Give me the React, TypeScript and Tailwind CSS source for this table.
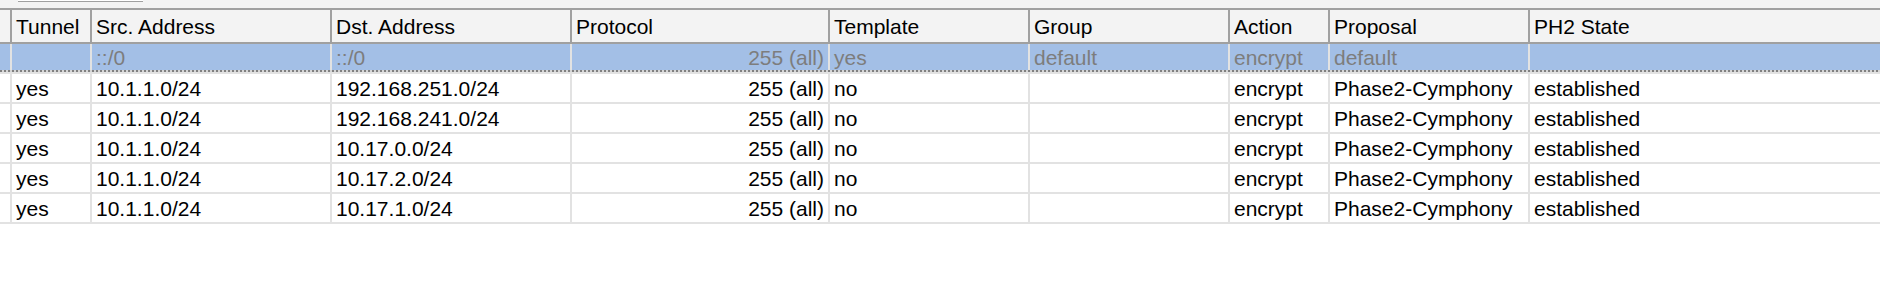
import React from "react"

type Row = {
  tunnel: string
  src: string
  dst: string
  proto: string
  template: string
  group: string
  action: string
  proposal: string
  state: string
}

const COLS: { key: keyof Row | "mark"; label: string; w: string; right?: boolean }[] = [
  { key: "mark", label: "", w: "w-[10px]" },
  { key: "tunnel", label: "Tunnel", w: "w-[80px]" },
  { key: "src", label: "Src. Address", w: "w-[240px]" },
  { key: "dst", label: "Dst. Address", w: "w-[240px]" },
  { key: "proto", label: "Protocol", w: "w-[258px]", right: true },
  { key: "template", label: "Template", w: "w-[200px]" },
  { key: "group", label: "Group", w: "w-[200px]" },
  { key: "action", label: "Action", w: "w-[100px]" },
  { key: "proposal", label: "Proposal", w: "w-[200px]" },
  { key: "state", label: "PH2 State", w: "flex-1" },
]

const templateRow: Row = {
  tunnel: "",
  src: "::/0",
  dst: "::/0",
  proto: "255 (all)",
  template: "yes",
  group: "default",
  action: "encrypt",
  proposal: "default",
  state: "",
}

const dsts = ["192.168.251.0/24", "192.168.241.0/24", "10.17.0.0/24", "10.17.2.0/24", "10.17.1.0/24"]

const rows: Row[] = dsts.map((dst) => ({
  tunnel: "yes",
  src: "10.1.1.0/24",
  dst,
  proto: "255 (all)",
  template: "no",
  group: "",
  action: "encrypt",
  proposal: "Phase2-Cymphony",
  state: "established",
}))

function Cells({ row, h }: { row?: Row; h: string }) {
  return (
    <div className={`flex ${h}`}>
      {COLS.map((c, i) => (
        <div
          key={c.key}
          className={`${c.w} flex shrink-0 items-center overflow-hidden whitespace-nowrap ${i > 0 ? "border-l-2 border-[#e2e2e2]" : ""} ${
            c.right ? "justify-end pr-[4px]" : "pl-[4px]"
          }`}
        >
          {row && c.key !== "mark" ? row[c.key] : ""}
        </div>
      ))}
    </div>
  )
}

export default function App() {
  return (
    <div
      className="h-[284px] w-[1880px] overflow-hidden bg-white text-[21px] leading-none text-black"
      style={{ fontFamily: '"Liberation Sans", Arial, sans-serif' }}
    >
      {/* toolbar remains */}
      <div className="h-[8px] border-b-0 bg-[#f3f3f3]">
        <div className="ml-[18px] h-[2px] w-[125px] border-b border-[#a0a0a0] bg-white" />
      </div>

      {/* header */}
      <div className="flex h-[36px] border-y-2 border-[#a0a0a0] bg-[#f3f3f3]">
        {COLS.map((c, i) => (
          <div
            key={c.key}
            className={`${c.w} flex shrink-0 items-center whitespace-nowrap pl-[4px] ${i > 0 ? "border-l-2 border-[#a0a0a0]" : ""}`}
          >
            {c.label}
          </div>
        ))}
      </div>

      {/* template row (selected) */}
      <div className="border-b-2 border-[#e2e2e2] bg-[#a3bfe6] text-[#7d7d7d]">
        <Cells row={templateRow} h="h-[26px]" />
        <div className="h-[2px] bg-[repeating-linear-gradient(90deg,#808080_0_2px,#d6d6d6_2px_4px)]" />
      </div>

      {rows.map((r, i) => (
        <div key={i} className="border-b-2 border-[#e2e2e2]">
          <Cells row={r} h="h-[28px]" />
        </div>
      ))}
    </div>
  )
}
